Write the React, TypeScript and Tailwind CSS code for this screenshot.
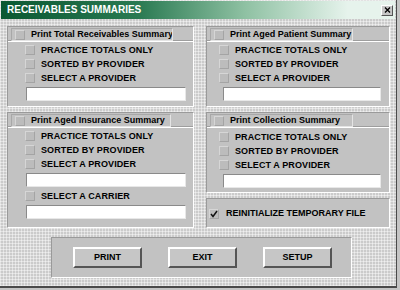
import React from "react";

type Opt = { label: string; checked?: boolean };

const texture =
  "bg-[#cbcbcb] bg-[image:linear-gradient(90deg,rgba(255,255,255,0.45)_1px,transparent_1px),linear-gradient(rgba(255,255,255,0.45)_1px,transparent_1px)] bg-[size:3px_3px]";

function Box({ checked }: { checked?: boolean }) {
  return (
    <div className="w-[10px] h-[10px] shrink-0 bg-[#bcbcbc] border-t border-l border-[#d6d6d6] border-b border-r border-b-[#a4a4a4] border-r-[#a4a4a4] flex items-center justify-center">
      {checked && (
        <svg width="8" height="8" viewBox="0 0 8 8">
          <path d="M1 4 L3 6.5 L7 1" fill="none" stroke="#111" strokeWidth="1.5" />
        </svg>
      )}
    </div>
  );
}

function Field() {
  return <div className="h-[14px] bg-white border border-t-[#8a8a8a] border-l-[#8a8a8a] border-b-[#e8e8e8] border-r-[#e8e8e8]" />;
}

function Row({ label, checked }: Opt) {
  return (
    <div className="h-[14px] flex items-center gap-[6px]">
      <Box checked={checked} />
      <span className="text-[9px] font-bold text-black leading-none tracking-[0.1px]">{label}</span>
    </div>
  );
}

function Panel({
  title,
  headW,
  h,
  children,
}: {
  title: string;
  headW: string;
  h: string;
  children: React.ReactNode;
}) {
  return (
    <div className={`${h} bg-[#c2c2c2] border border-t-[#9a9a9a] border-l-[#9a9a9a] border-b-white border-r-white flex flex-col`}>
      <div className="h-[14px] pt-[1px] px-[3px] border-b border-b-[#9e9e9e]">
        <div className={`${headW} h-[13px] flex items-center gap-[6px] pl-[3px] border border-t-[#a8a8a8] border-l-[#a8a8a8] border-b-[#e4e4e4] border-r-[#e4e4e4] overflow-hidden whitespace-nowrap`}>
          <Box />
          <span className="text-[9px] font-bold text-black leading-none">{title}</span>
        </div>
      </div>
      <div className="h-[1px] bg-white" />
      {children}
    </div>
  );
}

function Btn({ label }: { label: string }) {
  return (
    <div className="w-[69px] h-[21px] bg-[#c6c6c6] border-t-2 border-l-2 border-white border-b-2 border-r-2 border-b-[#555] border-r-[#555] flex items-center justify-center">
      <span className="text-[9px] font-bold text-black leading-none">{label}</span>
    </div>
  );
}

const provider: Opt[] = [
  { label: "PRACTICE TOTALS ONLY" },
  { label: "SORTED BY PROVIDER" },
  { label: "SELECT A PROVIDER" },
];

export default function App() {
  return (
    <div className="w-[400px] h-[290px] bg-[#c4c4c4] font-['Liberation_Sans',Arial,sans-serif]">
      <div className={`w-[397px] h-[288px] ${texture} border-r border-b-2 border-r-[#4a4a4a] border-b-[#4a4a4a] flex flex-col`}>
        {/* title bar */}
        <div className="h-[18px] mt-[1px] mx-[1px] bg-[linear-gradient(to_right,#0a5832_0%,#2a7a52_35%,#8fc1a3_62%,#e6f3ec_88%)] flex items-center justify-between pl-[6px] pr-[2px]">
          <span className="text-[10px] font-bold text-white leading-none">RECEIVABLES SUMMARIES</span>
          <div className="w-[12px] h-[11px] bg-[#c6c6c6] border border-t-white border-l-white border-b-[#555] border-r-[#555] flex items-center justify-center">
            <svg width="7" height="6" viewBox="0 0 7 6">
              <path d="M1 0.5 L6 5.5 M6 0.5 L1 5.5" stroke="#000" strokeWidth="1.3" />
            </svg>
          </div>
        </div>

        <div className="flex gap-[12px] pl-[7px] pt-[7px]">
          {/* left column */}
          <div className="w-[187px] flex flex-col gap-[5px]">
            <Panel title="Print Total Receivables Summary" headW="w-[162px]" h="h-[81px]">
              <div className="pl-[17px] pt-[1px]">
                {provider.map((o) => <Row key={o.label} {...o} />)}
              </div>
              <div className="ml-[18px] mr-[7px] mt-[2px]"><Field /></div>
            </Panel>
            <Panel title="Print Aged Insurance Summary" headW="w-[160px]" h="h-[116px]">
              <div className="pl-[17px] pt-[1px]">
                {provider.map((o) => <Row key={o.label} {...o} />)}
              </div>
              <div className="ml-[18px] mr-[7px] mt-[2px]"><Field /></div>
              <div className="pl-[17px] mt-[2px]"><Row label="SELECT A CARRIER" /></div>
              <div className="ml-[18px] mr-[7px] mt-[2px]"><Field /></div>
            </Panel>
          </div>

          {/* right column */}
          <div className="w-[184px] flex flex-col gap-[5px]">
            <Panel title="Print Aged Patient Summary" headW="w-[143px]" h="h-[81px]">
              <div className="pl-[12px] pt-[1px]">
                {provider.map((o) => <Row key={o.label} {...o} />)}
              </div>
              <div className="ml-[16px] mr-[8px] mt-[2px]"><Field /></div>
            </Panel>
            <Panel title="Print Collection Summary" headW="w-[143px]" h="h-[81px]">
              <div className="pl-[12px] pt-[2px]">
                {provider.map((o) => <Row key={o.label} {...o} />)}
              </div>
              <div className="ml-[16px] mr-[8px] mt-[2px]"><Field /></div>
            </Panel>
            <div className="h-[30px] bg-[#c2c2c2] border border-t-[#9a9a9a] border-l-[#9a9a9a] border-b-white border-r-white flex items-center pl-[2px] pt-[1px] gap-[7px]">
              <Box checked />
              <span className="text-[9px] font-bold text-black leading-none">REINITIALIZE TEMPORARY FILE</span>
            </div>
          </div>
        </div>

        {/* buttons */}
        <div className="ml-[51px] mt-[9px] w-[301px] h-[41px] bg-[#c2c2c2] border border-t-[#9a9a9a] border-l-[#9a9a9a] border-b-white border-r-white flex items-center pl-[21px] gap-[26px]">
          <Btn label="PRINT" />
          <Btn label="EXIT" />
          <Btn label="SETUP" />
        </div>
      </div>
    </div>
  );
}
